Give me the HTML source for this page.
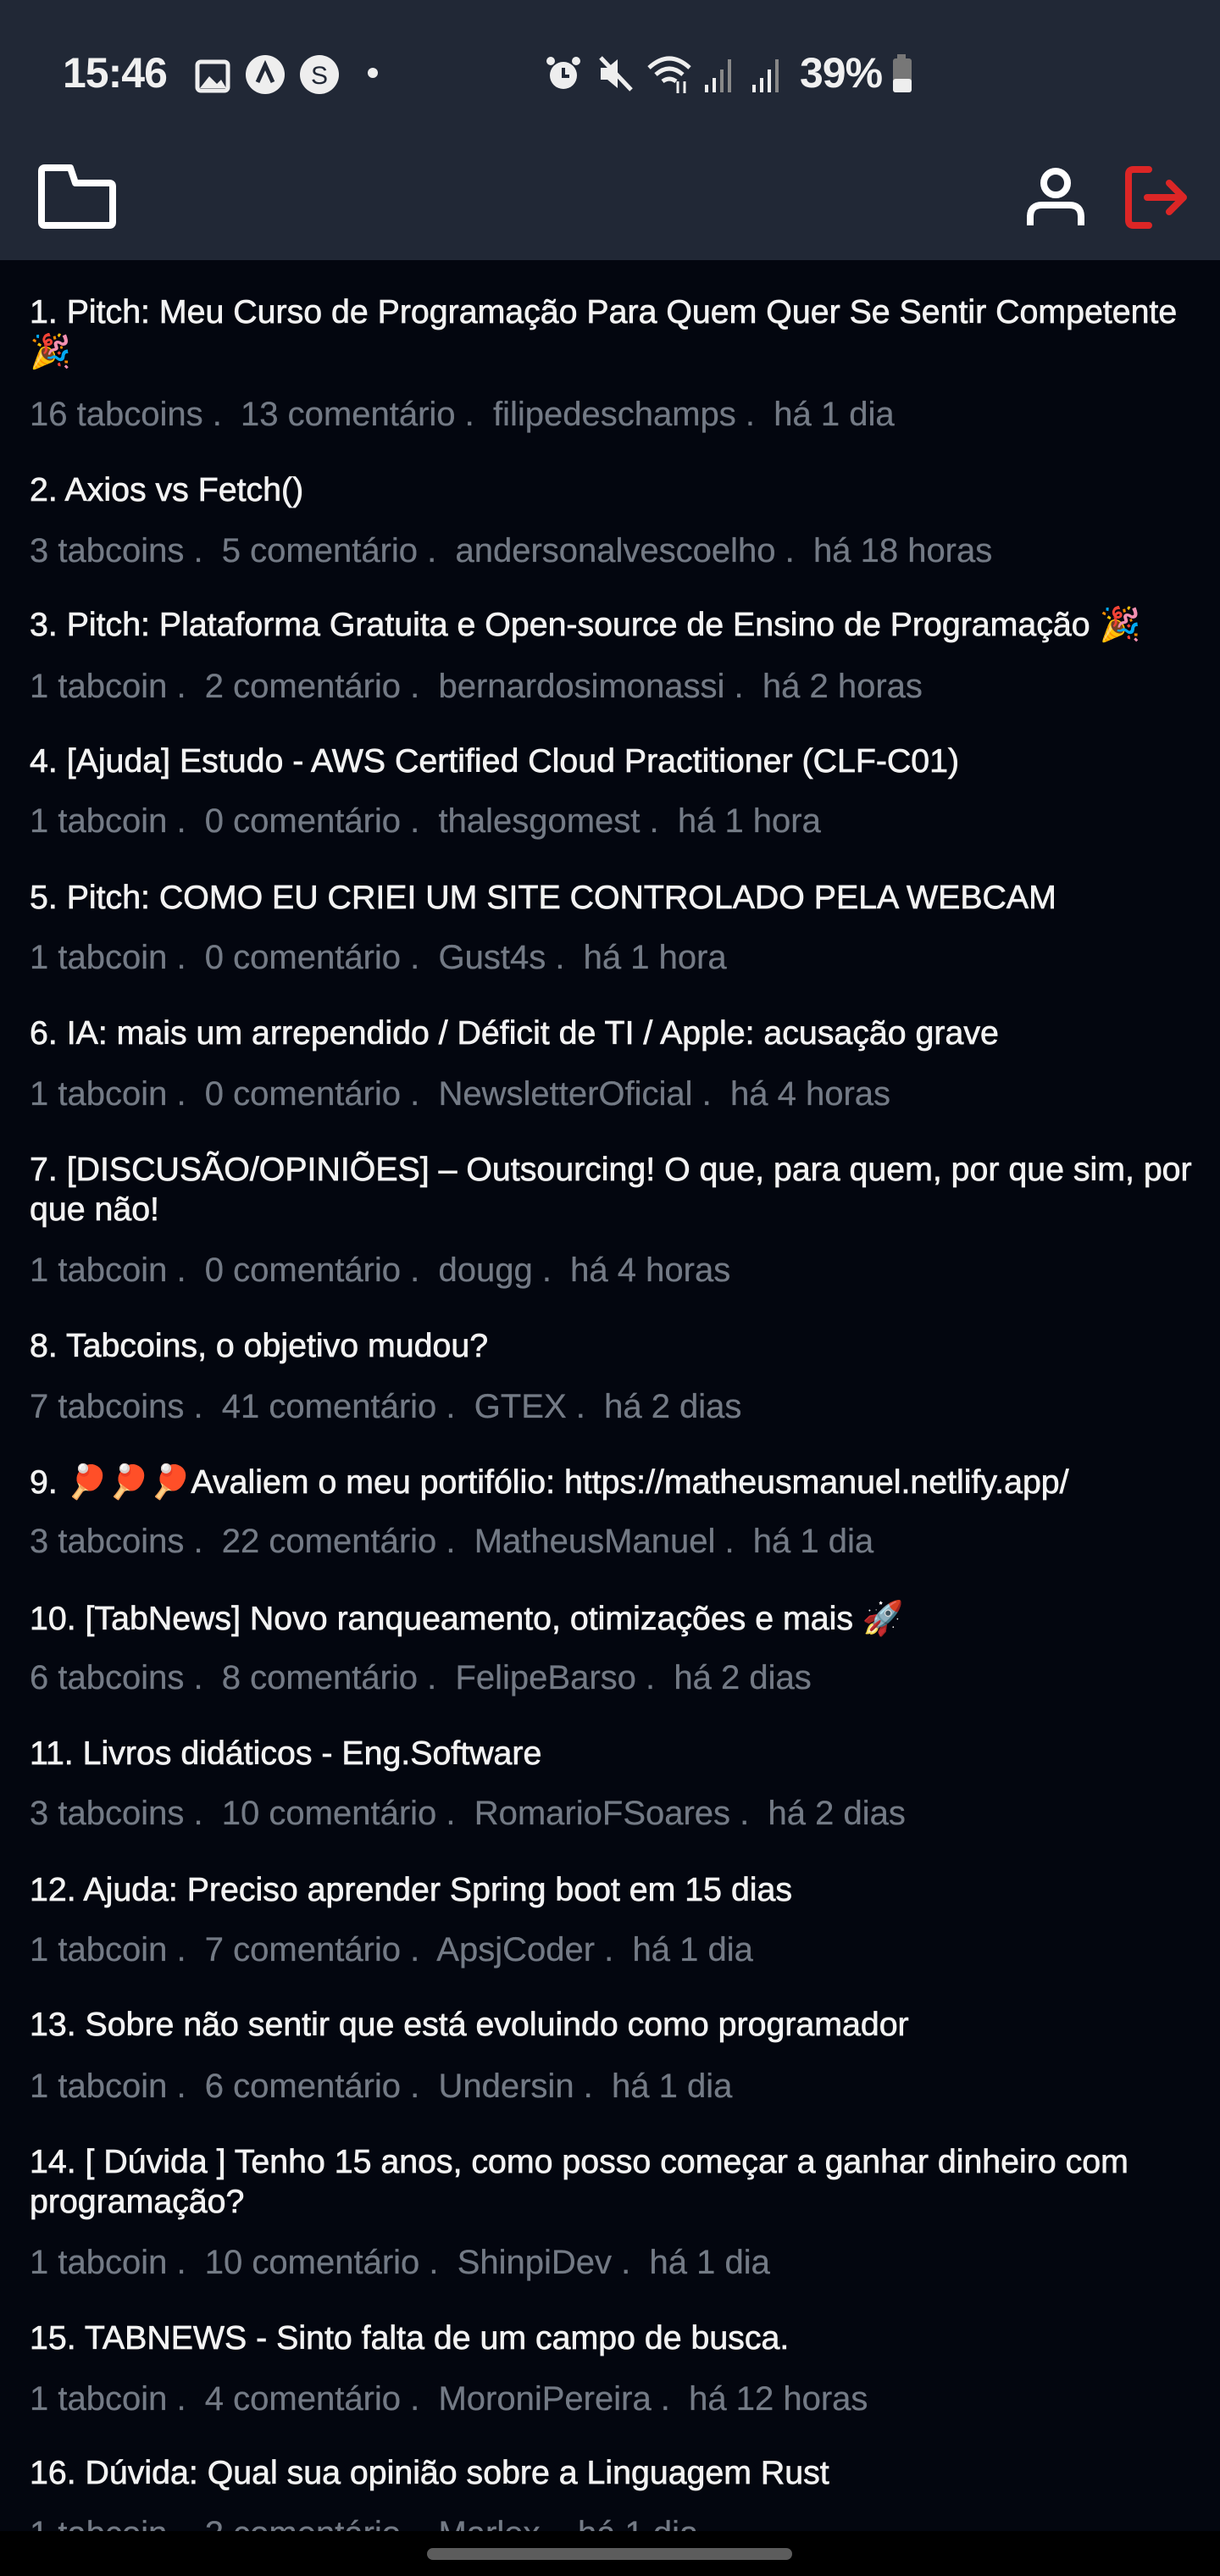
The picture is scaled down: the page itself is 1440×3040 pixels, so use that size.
<!DOCTYPE html>
<html><head><meta charset="utf-8">
<style>
*{margin:0;padding:0;box-sizing:border-box}
body{width:1440px;height:3040px;background:#03060f;font-family:"Liberation Sans",Roboto,sans-serif;position:relative;overflow:hidden}
.top{position:absolute;left:0;top:0;width:1440px;height:307px;background:#212836}
.t{position:absolute;left:35px;color:#f2f2f2;font-size:39.3px;line-height:46px;white-space:nowrap;-webkit-text-stroke:0.7px #f2f2f2}
.m{position:absolute;left:35px;color:#737a85;font-size:40px;line-height:46px;white-space:nowrap;-webkit-text-stroke:0.3px #737a85}
.nav{position:absolute;left:0;top:2987px;width:1440px;height:53px;background:#000}
.pill{position:absolute;left:504px;top:3007px;width:431px;height:14px;border-radius:7px;background:#5c5c5c}
.sb{position:absolute;color:#f0f0f0;font-size:50px;line-height:56px;top:58px;font-weight:bold;letter-spacing:-1px}
</style></head><body>
<div class="top">
 <div class="sb" style="left:74px">15:46</div>
 <svg style="position:absolute;left:230px;top:70px" width="42" height="40" viewBox="0 0 42 40"><rect x="3" y="3" width="36" height="34" rx="4" fill="none" stroke="#eee" stroke-width="5"/><path d="M6 34 L17 20 L26 29 L31 24 L37 34Z" fill="#eee"/></svg>
 <svg style="position:absolute;left:288px;top:63px" width="50" height="50"><circle cx="25" cy="25" r="23" fill="#eee"/><path d="M16 34 L25 14 L34 34" fill="none" stroke="#212836" stroke-width="5"/></svg>
 <svg style="position:absolute;left:352px;top:63px" width="50" height="50"><circle cx="25" cy="25" r="23" fill="#eee"/><text x="25" y="36" font-size="30" text-anchor="middle" fill="#212836" font-family="Liberation Sans">S</text></svg>
 <div style="position:absolute;left:434px;top:80px;width:12px;height:12px;border-radius:6px;background:#eee"></div>
 <svg style="position:absolute;left:642px;top:64px" width="46" height="46"><circle cx="23" cy="25" r="16" fill="#eee"/><path d="M23 16v10h7" stroke="#212836" stroke-width="4" fill="none"/><circle cx="8" cy="8" r="5" fill="#eee"/><circle cx="38" cy="8" r="5" fill="#eee"/></svg>
 <svg style="position:absolute;left:705px;top:64px" width="44" height="46"><path d="M4 16h8l12-10v34l-12-10H4z" fill="#eee"/><path d="M4 4 L40 42" stroke="#eee" stroke-width="5"/></svg>
 <svg style="position:absolute;left:762px;top:60px" width="60" height="52"><path d="M4 20 Q28 -2 52 20" stroke="#eee" stroke-width="5" fill="none"/><path d="M12 28 Q28 14 44 28" stroke="#eee" stroke-width="5" fill="none"/><path d="M20 36 Q28 30 36 36" stroke="#eee" stroke-width="5" fill="none"/><path d="M38 36v14M46 36v14" stroke="#eee" stroke-width="3"/></svg>
 <svg style="position:absolute;left:830px;top:66px" width="40" height="44"><rect x="2" y="34" width="4" height="9" fill="#eee"/><rect x="11" y="26" width="4" height="17" fill="#eee"/><rect x="20" y="16" width="4" height="27" fill="#888"/><rect x="29" y="4" width="4" height="39" fill="#888"/></svg>
 <svg style="position:absolute;left:886px;top:66px" width="40" height="44"><rect x="2" y="34" width="4" height="9" fill="#eee"/><rect x="11" y="26" width="4" height="17" fill="#eee"/><rect x="20" y="16" width="4" height="27" fill="#eee"/><rect x="29" y="4" width="4" height="39" fill="#888"/></svg>
 <div class="sb" style="left:944px">39%</div>
 <svg style="position:absolute;left:1050px;top:64px" width="30" height="46"><rect x="9" y="0" width="10" height="6" fill="#777"/><rect x="4" y="5" width="22" height="40" rx="3" fill="#777"/><rect x="4" y="29" width="22" height="16" rx="3" fill="#eee"/></svg>
 <svg style="position:absolute;left:43px;top:194px" width="96" height="76" viewBox="0 0 96 76"><path d="M6 8 Q6 4 10 4 H40 L46 22 H86 Q90 22 90 26 V68 Q90 72 86 72 H10 Q6 72 6 68Z" fill="none" stroke="#fff" stroke-width="8" stroke-linejoin="round"/></svg>
 <svg style="position:absolute;left:1210px;top:194px" width="72" height="76" viewBox="0 0 72 76"><circle cx="36" cy="22" r="14" fill="none" stroke="#fff" stroke-width="8"/><path d="M6 72 V62 Q6 48 20 48 H52 Q66 48 66 62 V72" fill="none" stroke="#fff" stroke-width="8"/></svg>
 <svg style="position:absolute;left:1326px;top:194px" width="80" height="78" viewBox="0 0 80 78"><path d="M30 6 H12 Q6 6 6 12 V66 Q6 72 12 72 H30" fill="none" stroke="#dc2626" stroke-width="8" stroke-linecap="round"/><path d="M28 39 H70 M54 22 L71 39 L54 56" fill="none" stroke="#dc2626" stroke-width="8" stroke-linecap="round" stroke-linejoin="round"/></svg>
</div>

<div class="t" style="top:345px">1. Pitch: Meu Curso de Programação Para Quem Quer Se Sentir Competente</div>
<div class="t" style="top:392px">🎉</div>
<div class="m" style="top:466px">16 tabcoins .&nbsp; 13 comentário .&nbsp; filipedeschamps .&nbsp; há 1 dia</div>

<div class="t" style="top:555px">2. Axios vs Fetch()</div>
<div class="m" style="top:627px">3 tabcoins .&nbsp; 5 comentário .&nbsp; andersonalvescoelho .&nbsp; há 18 horas</div>

<div class="t" style="top:714px">3. Pitch: Plataforma Gratuita e Open-source de Ensino de Programação 🎉</div>
<div class="m" style="top:787px">1 tabcoin .&nbsp; 2 comentário .&nbsp; bernardosimonassi .&nbsp; há 2 horas</div>

<div class="t" style="top:875px">4. [Ajuda] Estudo - AWS Certified Cloud Practitioner (CLF-C01)</div>
<div class="m" style="top:946px">1 tabcoin .&nbsp; 0 comentário .&nbsp; thalesgomest .&nbsp; há 1 hora</div>

<div class="t" style="top:1036px">5. Pitch: COMO EU CRIEI UM SITE CONTROLADO PELA WEBCAM</div>
<div class="m" style="top:1107px">1 tabcoin .&nbsp; 0 comentário .&nbsp; Gust4s .&nbsp; há 1 hora</div>

<div class="t" style="top:1196px">6. IA: mais um arrependido / Déficit de TI / Apple: acusação grave</div>
<div class="m" style="top:1268px">1 tabcoin .&nbsp; 0 comentário .&nbsp; NewsletterOficial .&nbsp; há 4 horas</div>

<div class="t" style="top:1357px">7. [DISCUSÃO/OPINIÕES] – Outsourcing! O que, para quem, por que sim, por</div>
<div class="t" style="top:1404px">que não!</div>
<div class="m" style="top:1476px">1 tabcoin .&nbsp; 0 comentário .&nbsp; dougg .&nbsp; há 4 horas</div>

<div class="t" style="top:1565px">8. Tabcoins, o objetivo mudou?</div>
<div class="m" style="top:1637px">7 tabcoins .&nbsp; 41 comentário .&nbsp; GTEX .&nbsp; há 2 dias</div>

<div class="t" style="top:1726px">9. 🏓🏓🏓Avaliem o meu portifólio: https://matheusmanuel.netlify.app/</div>
<div class="m" style="top:1796px">3 tabcoins .&nbsp; 22 comentário .&nbsp; MatheusManuel .&nbsp; há 1 dia</div>

<div class="t" style="top:1887px">10. [TabNews] Novo ranqueamento, otimizações e mais 🚀</div>
<div class="m" style="top:1957px">6 tabcoins .&nbsp; 8 comentário .&nbsp; FelipeBarso .&nbsp; há 2 dias</div>

<div class="t" style="top:2046px">11. Livros didáticos - Eng.Software</div>
<div class="m" style="top:2117px">3 tabcoins .&nbsp; 10 comentário .&nbsp; RomarioFSoares .&nbsp; há 2 dias</div>

<div class="t" style="top:2207px">12. Ajuda: Preciso aprender Spring boot em 15 dias</div>
<div class="m" style="top:2278px">1 tabcoin .&nbsp; 7 comentário .&nbsp; ApsjCoder .&nbsp; há 1 dia</div>

<div class="t" style="top:2366px">13. Sobre não sentir que está evoluindo como programador</div>
<div class="m" style="top:2439px">1 tabcoin .&nbsp; 6 comentário .&nbsp; Undersin .&nbsp; há 1 dia</div>

<div class="t" style="top:2528px">14. [ Dúvida ] Tenho 15 anos, como posso começar a ganhar dinheiro com</div>
<div class="t" style="top:2575px">programação?</div>
<div class="m" style="top:2647px">1 tabcoin .&nbsp; 10 comentário .&nbsp; ShinpiDev .&nbsp; há 1 dia</div>

<div class="t" style="top:2736px">15. TABNEWS - Sinto falta de um campo de busca.</div>
<div class="m" style="top:2808px">1 tabcoin .&nbsp; 4 comentário .&nbsp; MoroniPereira .&nbsp; há 12 horas</div>

<div class="t" style="top:2895px">16. Dúvida: Qual sua opinião sobre a Linguagem Rust</div>
<div class="m" style="top:2967px">1 tabcoin .&nbsp; 2 comentário .&nbsp; Marlex .&nbsp; há 1 dia</div>

<div class="nav"></div>
<div class="pill"></div>
</body></html>
